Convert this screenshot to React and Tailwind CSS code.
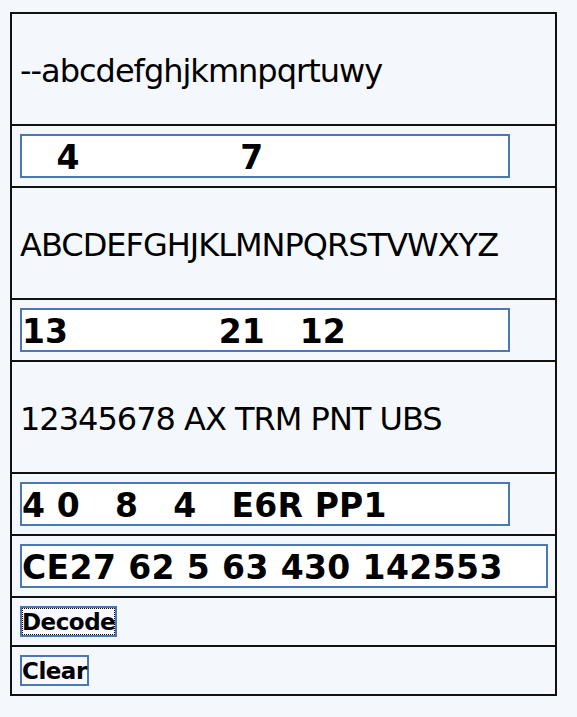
const fieldClass =
  "h-[44px] border-2 border-[#4a77b5] bg-white px-0 pt-1 text-[33px] font-bold text-black outline-none";

const Row = ({ h, last, children }) => (
  <div
    className={
      (last ? "" : "border-b-2 border-[#111] ") +
      "flex items-center pl-2 " +
      h
    }
  >
    {children}
  </div>
);

export default function App() {
  return (
    <div
      className="min-h-screen bg-[#f4f8fd] pl-[10px] pt-[12px]"
      style={{ fontFamily: '"DejaVu Sans", Verdana, sans-serif' }}
    >
      <div className="flex w-[547px] flex-col border-2 border-[#111]">
        {/* alphabet row */}
        <Row h="h-[112px]">
          <span className="pt-[3px] text-[32px] tracking-[-1px] text-black">--abcdefghjkmnpqrtuwy</span>
        </Row>
        <Row h="h-[62px]">
          <input
            readOnly
            value="   4              7"
            className={fieldClass + " w-[490px]"}
          />
        </Row>

        <Row h="h-[112px]">
          <span className="pt-[3px] text-[32px] tracking-[-1px] text-black">ABCDEFGHJKLMNPQRSTVWXYZ</span>
        </Row>
        <Row h="h-[62px]">
          <input
            readOnly
            value="13             21   12"
            className={fieldClass + " w-[490px] tracking-[0.1px]"}
          />
        </Row>

        <Row h="h-[112px]">
          <span className="pt-[3px] text-[32px] tracking-[-1px] text-black">12345678 AX TRM PNT UBS</span>
        </Row>
        <Row h="h-[62px]">
          <input
            readOnly
            value="4 0   8   4   E6R PP1"
            className={fieldClass + " w-[490px] tracking-[0.2px]"}
          />
        </Row>

        {/* result */}
        <Row h="h-[62px]">
          <input
            readOnly
            value="CE27 62 5 63 430 142553"
            className={fieldClass + " w-[528px] tracking-[0.4px]"}
          />
        </Row>

        <Row h="h-[49px]">
          <button className="h-[31px] border-2 border-[#4a77b5] bg-[#f7f9fd] p-0 pt-[2px] text-[23px] font-bold leading-none tracking-[-0.5px] text-black outline-1 outline-dotted outline-black -outline-offset-3">
            Decode
          </button>
        </Row>
        <Row h="h-[47px]" last>
          <button className="h-[31px] border-2 border-[#4a77b5] bg-[#f7f9fd] p-0 pt-[2px] text-[23px] font-bold leading-none tracking-[-0.5px] text-black">
            Clear
          </button>
        </Row>
      </div>
    </div>
  );
}
